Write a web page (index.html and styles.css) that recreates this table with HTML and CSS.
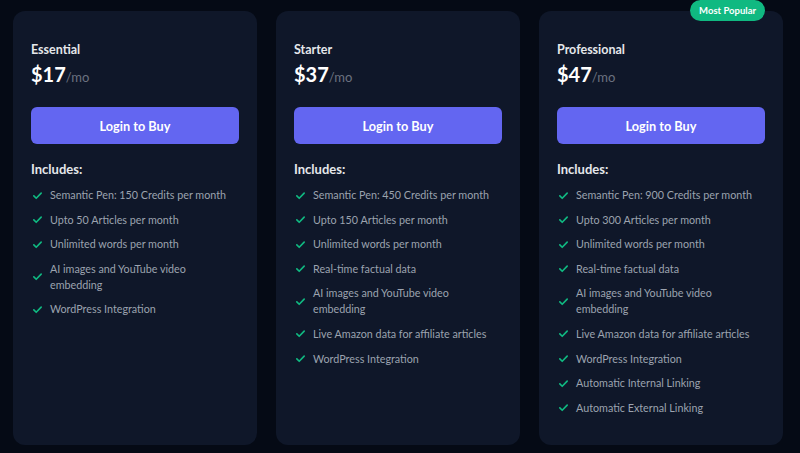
FILE: index.html
```html
<!DOCTYPE html>
<html>
<head>
<meta charset="utf-8">
<link rel="stylesheet" href="styles.css">
</head>
<body>
<div class="plans">
  <div class="card">
    <div class="name">Essential</div>
    <div class="price"><span class="amount">$17</span><span class="per">/mo</span></div>
    <button class="buy">Login to Buy</button>
    <div class="includes">Includes:</div>
    <ul class="features">
      <li><svg class="check" viewBox="0 0 12 12"><path d="M2 6.4l2.6 2.6L10 3.4"/></svg><span>Semantic Pen: 150 Credits per month</span></li>
      <li><svg class="check" viewBox="0 0 12 12"><path d="M2 6.4l2.6 2.6L10 3.4"/></svg><span>Upto 50 Articles per month</span></li>
      <li><svg class="check" viewBox="0 0 12 12"><path d="M2 6.4l2.6 2.6L10 3.4"/></svg><span>Unlimited words per month</span></li>
      <li><svg class="check" viewBox="0 0 12 12"><path d="M2 6.4l2.6 2.6L10 3.4"/></svg><span>AI images and YouTube video embedding</span></li>
      <li><svg class="check" viewBox="0 0 12 12"><path d="M2 6.4l2.6 2.6L10 3.4"/></svg><span>WordPress Integration</span></li>
    </ul>
  </div>
  <div class="card">
    <div class="name">Starter</div>
    <div class="price"><span class="amount">$37</span><span class="per">/mo</span></div>
    <button class="buy">Login to Buy</button>
    <div class="includes">Includes:</div>
    <ul class="features">
      <li><svg class="check" viewBox="0 0 12 12"><path d="M2 6.4l2.6 2.6L10 3.4"/></svg><span>Semantic Pen: 450 Credits per month</span></li>
      <li><svg class="check" viewBox="0 0 12 12"><path d="M2 6.4l2.6 2.6L10 3.4"/></svg><span>Upto 150 Articles per month</span></li>
      <li><svg class="check" viewBox="0 0 12 12"><path d="M2 6.4l2.6 2.6L10 3.4"/></svg><span>Unlimited words per month</span></li>
      <li><svg class="check" viewBox="0 0 12 12"><path d="M2 6.4l2.6 2.6L10 3.4"/></svg><span>Real-time factual data</span></li>
      <li><svg class="check" viewBox="0 0 12 12"><path d="M2 6.4l2.6 2.6L10 3.4"/></svg><span>AI images and YouTube video embedding</span></li>
      <li><svg class="check" viewBox="0 0 12 12"><path d="M2 6.4l2.6 2.6L10 3.4"/></svg><span>Live Amazon data for affiliate articles</span></li>
      <li><svg class="check" viewBox="0 0 12 12"><path d="M2 6.4l2.6 2.6L10 3.4"/></svg><span>WordPress Integration</span></li>
    </ul>
  </div>
  <div class="card">
    <div class="badge">Most Popular</div>
    <div class="name">Professional</div>
    <div class="price"><span class="amount">$47</span><span class="per">/mo</span></div>
    <button class="buy">Login to Buy</button>
    <div class="includes">Includes:</div>
    <ul class="features">
      <li><svg class="check" viewBox="0 0 12 12"><path d="M2 6.4l2.6 2.6L10 3.4"/></svg><span>Semantic Pen: 900 Credits per month</span></li>
      <li><svg class="check" viewBox="0 0 12 12"><path d="M2 6.4l2.6 2.6L10 3.4"/></svg><span>Upto 300 Articles per month</span></li>
      <li><svg class="check" viewBox="0 0 12 12"><path d="M2 6.4l2.6 2.6L10 3.4"/></svg><span>Unlimited words per month</span></li>
      <li><svg class="check" viewBox="0 0 12 12"><path d="M2 6.4l2.6 2.6L10 3.4"/></svg><span>Real-time factual data</span></li>
      <li><svg class="check" viewBox="0 0 12 12"><path d="M2 6.4l2.6 2.6L10 3.4"/></svg><span>AI images and YouTube video embedding</span></li>
      <li><svg class="check" viewBox="0 0 12 12"><path d="M2 6.4l2.6 2.6L10 3.4"/></svg><span>Live Amazon data for affiliate articles</span></li>
      <li><svg class="check" viewBox="0 0 12 12"><path d="M2 6.4l2.6 2.6L10 3.4"/></svg><span>WordPress Integration</span></li>
      <li><svg class="check" viewBox="0 0 12 12"><path d="M2 6.4l2.6 2.6L10 3.4"/></svg><span>Automatic Internal Linking</span></li>
      <li><svg class="check" viewBox="0 0 12 12"><path d="M2 6.4l2.6 2.6L10 3.4"/></svg><span>Automatic External Linking</span></li>
    </ul>
  </div>
</div>
</body>
</html>
```

FILE: styles.css
```css
html, body {
  margin: 0;
  padding: 0;
  background: #050a15;
  font-family: Lato, "Noto Sans", sans-serif;
}

.plans {
  display: flex;
  gap: 19px;
  padding: 11px 13px 10px;
  align-items: stretch;
}

.card {
  position: relative;
  width: 244px;
  box-sizing: border-box;
  background: #0f1729;
  border-radius: 12px;
  padding: 31px 18px 29px;
  display: flex;
  flex-direction: column;
}

.badge {
  position: absolute;
  top: -11px;
  right: 18px;
  background: #10b981;
  color: #ffffff;
  font-size: 9.5px;
  font-weight: 700;
  line-height: 21px;
  padding: 0 9px;
  border-radius: 11px;
}

.name {
  color: #e5e7eb;
  font-size: 12.5px;
  font-weight: 700;
  line-height: 16px;
}

.price {
  margin-top: 4px;
  line-height: 24px;
  display: flex;
  align-items: baseline;
}

.amount {
  color: #ffffff;
  font-size: 20px;
  font-weight: 700;
}

.per {
  color: #6b7280;
  font-size: 13px;
}

.buy {
  margin-top: 18px;
  height: 37px;
  border: 0;
  border-radius: 6px;
  background: #6366f1;
  color: #ffffff;
  font-family: inherit;
  font-size: 12.7px;
  font-weight: 700;
  padding: 0;
}

.includes {
  margin-top: 17px;
  color: #e5e7eb;
  font-size: 13px;
  font-weight: 700;
  line-height: 16px;
}

.features {
  list-style: none;
  margin: 10px 0 0;
  padding: 0;
  display: flex;
  flex-direction: column;
  gap: 8.6px;
}

.features li {
  display: flex;
  align-items: center;
  color: #9ca3af;
  font-size: 10.75px;
  line-height: 16px;
}

.check {
  flex: none;
  width: 11px;
  height: 11px;
  margin: 0 7px 0 1px;
  fill: none;
  stroke: #10b981;
  stroke-width: 1.8;
  stroke-linecap: round;
  stroke-linejoin: round;
}
```
